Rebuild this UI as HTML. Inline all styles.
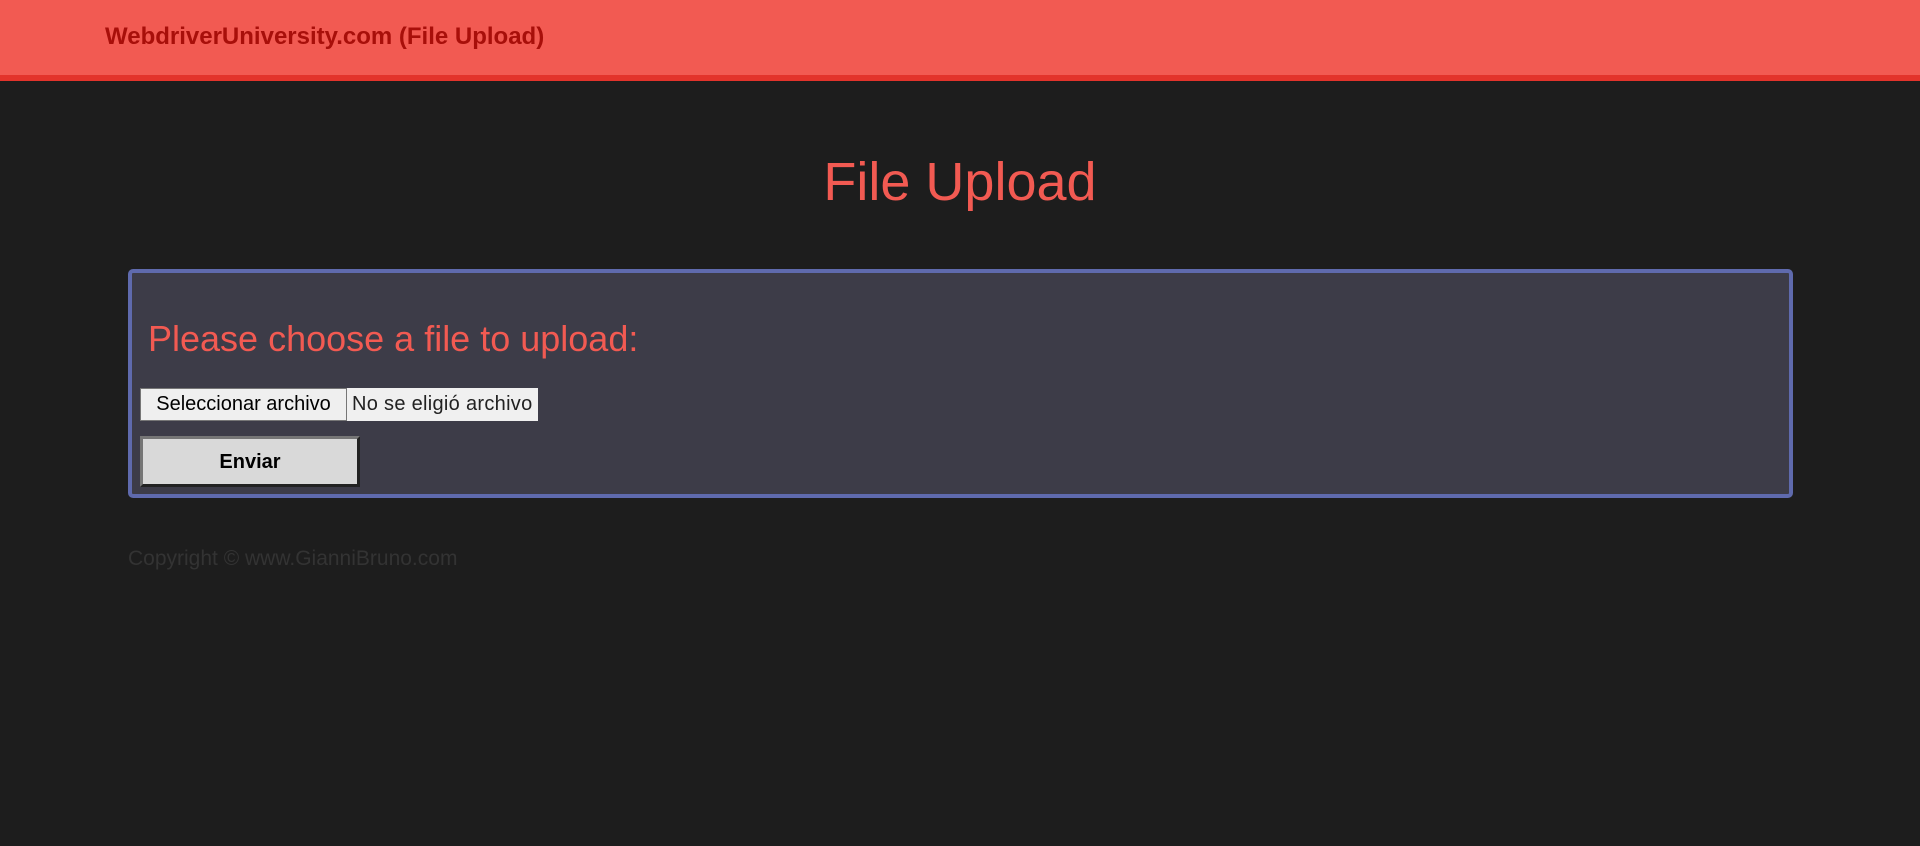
<!DOCTYPE html>
<html><head><meta charset="utf-8"><style>
*{margin:0;padding:0;box-sizing:border-box}
body{width:1920px;height:846px;background:#1d1d1d;font-family:"Liberation Sans",Arial,sans-serif;position:relative;overflow:hidden}
.hdr{position:absolute;left:0;top:0;width:1920px;height:81px;background:#f25a52;border-bottom:6px solid #e3332b}
.hdr span{position:absolute;left:105px;top:23px;font-size:24px;font-weight:bold;color:#a80f0a;line-height:28px}
h1{position:absolute;left:0;width:1920px;top:150px;text-align:center;font-weight:normal;font-size:54px;line-height:64px;color:#f25a52}
.box{position:absolute;left:128px;top:269px;width:1665px;height:229px;background:#3d3c48;border:4px solid #5f6aad;border-radius:5px}
.h3{position:absolute;left:148px;top:318px;font-size:36px;line-height:42px;color:#f25a52}
.fbtn{position:absolute;left:140px;top:388px;width:207px;height:33px;background:#efefef;border:1px solid #767676;font-size:20px;line-height:31px;text-align:center;color:#000}
.ftxt{position:absolute;left:347px;top:388px;width:191px;height:33px;background:#f0f0f0;font-size:20px;line-height:33px;padding-left:5px;color:#222;letter-spacing:0.3px}
.send{position:absolute;left:140px;top:436px;width:220px;height:51px;background:#d9d9d9;border:3px solid;border-color:#767676 #222 #222 #767676;font-size:20px;font-weight:bold;line-height:47px;text-align:center;color:#000}
.copy{position:absolute;left:128px;top:547px;font-size:21px;line-height:24px;color:#333}
</style></head><body>
<div class="hdr"><span>WebdriverUniversity.com (File Upload)</span></div>
<h1>File Upload</h1>
<div class="box"></div>
<div class="h3">Please choose a file to upload:</div>
<div class="fbtn">Seleccionar archivo</div>
<div class="ftxt">No se eligió archivo</div>
<div class="send">Enviar</div>
<div class="copy">Copyright © www.GianniBruno.com</div>
</body></html>
